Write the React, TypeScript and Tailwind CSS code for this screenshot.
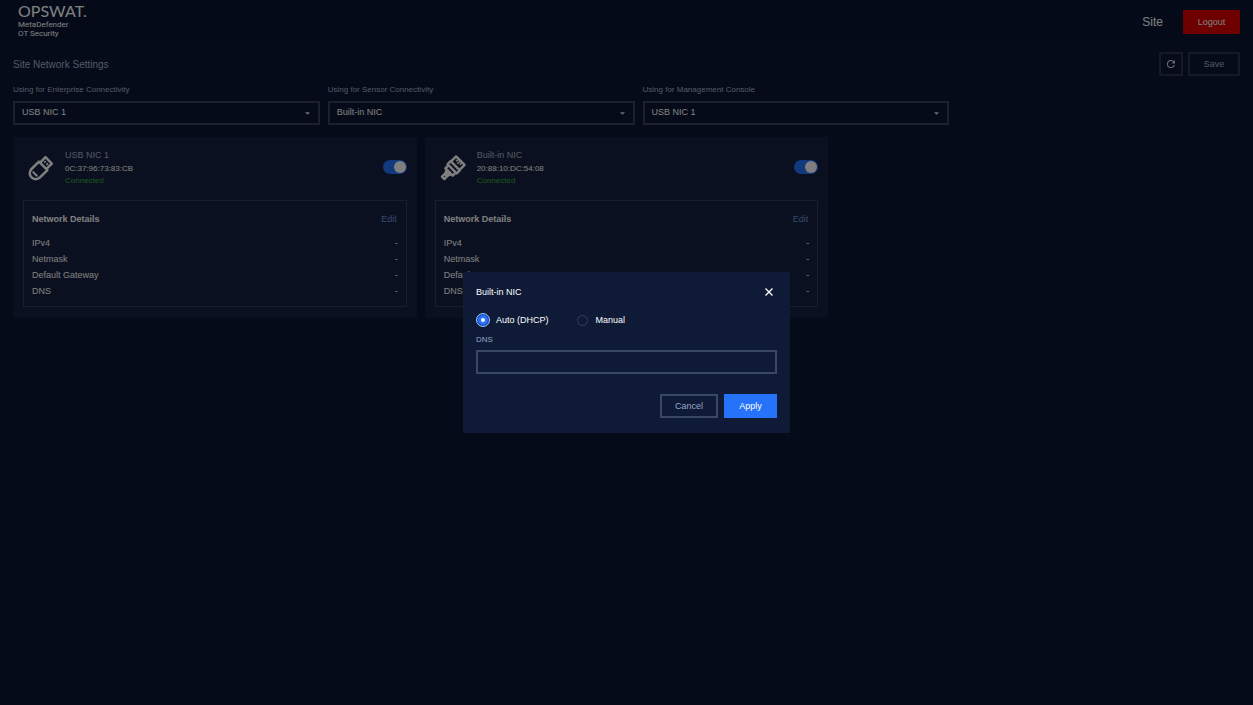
import { useState } from 'react';

const nics = ['USB NIC 1', 'Built-in NIC'];
const detailRows = ['IPv4', 'Netmask', 'Default Gateway', 'DNS'];

function UsbIcon() {
  return (
    <svg viewBox="0 0 26 26" className="h-[26px] w-[26px] overflow-visible" fill="none" stroke="#fff" strokeWidth="2.500" aria-hidden="true">
      <g transform="rotate(45 13 13)">
        <path d="M8.500 8V0.800h9V8" strokeLinejoin="round" />
        <path d="M7 8.500h12V19a6 6 0 0 1-12 0z" strokeLinejoin="round" />
        <path d="M10.600 4.500h1.800M13.700 4.500h1.800" strokeWidth="2" />
        <path d="M10.500 20h5" strokeWidth="2" strokeLinecap="round" />
      </g>
    </svg>
  );
}

function EthernetIcon() {
  return (
    <svg viewBox="0 0 26 26" className="h-[26px] w-[26px] overflow-visible" fill="none" stroke="#fff" strokeWidth="2.400" aria-hidden="true">
      <g transform="rotate(45 13 13)" strokeLinejoin="round">
        <path d="M7 8.500V1.200h12v7.300" />
        <path d="M10.500 1v3.500M13 1v4.500M15.500 1v3.500" strokeWidth="1.500" />
        <path d="M6.500 8.500h13v4.300h-13zM7.800 12.800h10.400v4.400h-10.400z" />
        <path d="M9.800 17.200h6.400l-1.200 3h-4z" fill="#fff" />
        <path d="M11.300 21.500h3.400v4h-3.400z" />
      </g>
    </svg>
  );
}

function RefreshIcon() {
  return (
    <svg viewBox="0 0 24 24" className="h-3 w-3" fill="currentColor" aria-hidden="true">
      <path d="M17.650 6.350A7.958 7.958 0 0 0 12 4a8 8 0 1 0 7.730 10h-2.080A6 6 0 1 1 12 6c1.660 0 3.140.690 4.220 1.780L13 11h7V4z" />
    </svg>
  );
}

function SelectField({ id, label, initial }: { id: string; label: string; initial: string }) {
  const [value, setValue] = useState(initial);
  return (
    <div className="flex w-1/4 flex-col">
      <label htmlFor={id} className="h-[17px] text-[8px] leading-3 text-[#a8b2ca]">{label}</label>
      <div className="relative">
        <select
          id={id}
          value={value}
          onChange={(e) => setValue(e.target.value)}
          className="block h-6 w-full appearance-none border-2 border-[#384258] bg-transparent px-[7px] text-[9px] text-white"
        >
          {nics.map((n) => <option key={n}>{n}</option>)}
        </select>
        <svg viewBox="0 0 6 3" className="pointer-events-none absolute top-[11px] right-[10px] h-[3px] w-[5px]" fill="#d9dbe0" aria-hidden="true">
          <path d="M0 0h6L3 3z" />
        </svg>
      </div>
    </div>
  );
}

function NicCard({ name, mac, icon }: { name: string; mac: string; icon: React.ReactNode }) {
  const [on, setOn] = useState(true);
  return (
    <section className="bg-[#14213e] px-[10px] pt-3 pb-[11px]">
      <div className="flex h-[51px] items-start">
        <div className="ml-1 pt-[7px]">{icon}</div>
        <div className="ml-3 flex-1">
          <h2 className="text-[9px] leading-3 text-[#a8b2ca]">{name}</h2>
          <p className="mt-[2px] text-[8px] leading-3 text-white">{mac}</p>
          <p className="text-[8px] leading-3 text-[#38b03c]">Connected</p>
        </div>
        <div className="relative mt-[11px] h-[14px] w-6">
          <input
            type="checkbox"
            role="switch"
            aria-label={name}
            checked={on}
            onChange={() => setOn(!on)}
            className="block h-full w-full cursor-pointer appearance-none rounded-full bg-[#4a5266] checked:bg-[#2672fb]"
          />
          <span className={on ? 'pointer-events-none absolute top-[1px] right-[1px] h-3 w-3 rounded-full bg-white' : 'pointer-events-none absolute top-[1px] left-[1px] h-3 w-3 rounded-full bg-white'} />
        </div>
      </div>
      <div className="border border-[#303c54] px-2 pt-3 pb-[7px]">
        <div className="mb-[10px] flex justify-between text-[9px] leading-3">
          <h3 className="font-bold text-white">Network Details</h3>
          <button type="button" className="mr-[1px] text-[#7090dc]">Edit</button>
        </div>
        <dl className="text-[9px] leading-4 text-white">
          {detailRows.map((row) => (
            <div key={row} className="flex justify-between">
              <dt>{row}</dt>
              <dd>-</dd>
            </div>
          ))}
        </dl>
      </div>
    </section>
  );
}

function EditDialog() {
  const [mode, setMode] = useState('auto');
  const [dns, setDns] = useState('');
  const radio = 'relative grid h-[14px] w-[14px] place-items-center';
  const input = 'h-[11px] w-[11px] appearance-none rounded-full border border-[#33415f] checked:h-[14px] checked:w-[14px] checked:border-[#9fbffb] checked:bg-[#2672fb] checked:shadow-[inset_0_0_0_1px_#1b4190]';
  const dot = 'pointer-events-none absolute h-1 w-1 rounded-full bg-white';
  return (
    <div role="dialog" aria-modal="true" aria-labelledby="dialog-title" className="w-[327px] bg-[#0e1a36] px-[13px] pt-3 pb-[15px] text-[9px] text-white">
      <div className="flex h-4 items-center justify-between">
        <h2 id="dialog-title" className="leading-3">Built-in NIC</h2>
        <button type="button" aria-label="Close" className="mr-1 block">
          <svg viewBox="0 0 8 8" className="block h-2 w-2" stroke="#fff" strokeWidth="1.300" aria-hidden="true">
            <path d="M.5.5l7 7M7.500.5l-7 7" />
          </svg>
        </button>
      </div>
      <div className="mt-3 flex h-4 items-center gap-[27px] leading-3">
        <label className="flex items-center gap-[6px]">
          <span className={radio}>
            <input type="radio" name="mode" checked={mode === 'auto'} onChange={() => setMode('auto')} className={input} />
            {mode === 'auto' && <span className={dot} />}
          </span>
          Auto (DHCP)
        </label>
        <label className="flex items-center gap-[6px]">
          <span className={radio}>
            <input type="radio" name="mode" checked={mode === 'manual'} onChange={() => setMode('manual')} className={input} />
            {mode === 'manual' && <span className={dot} />}
          </span>
          Manual
        </label>
      </div>
      <label htmlFor="dns" className="mt-[6px] block h-4 text-[8px] leading-3 text-[#98a6c8]">DNS</label>
      <input id="dns" value={dns} onChange={(e) => setDns(e.target.value)} className="block h-6 w-full border-2 border-[#3a4766] bg-transparent px-2 outline-none" />
      <div className="mt-5 flex justify-end gap-[6px]">
        <button type="button" className="h-6 w-[58px] border-2 border-[#3a4766] pt-[1px] text-[#98a6c8]">Cancel</button>
        <button type="button" className="h-6 w-[53px] bg-[#2672fb] pt-[1px] text-white">Apply</button>
      </div>
    </div>
  );
}

export default function App() {
  return (
    <div className="min-h-screen bg-[#0b1733] font-['Liberation_Sans',sans-serif]">
      <header className="flex h-11 items-center bg-[#091531] pr-[13px] pl-[18px]">
        <div className="flex-1 self-start pt-[5px] text-white">
          <div className="mb-[3px] font-['Lato',sans-serif] text-[16px] leading-3">OPSWAT.</div>
          <div className="font-['Roboto',sans-serif] text-[8px] leading-[9px]">MetaDefender<br />OT Security</div>
        </div>
        <a href="#site" className="mr-5 text-[12px] text-white">Site</a>
        <button type="button" className="h-6 w-[57px] bg-[#dc0000] pt-[2px] text-[9px] text-white">Logout</button>
      </header>
      <main className="px-[13px] pt-2">
        <div className="flex h-6 items-center">
          <h1 className="flex-1 text-[10px] text-[#a8b2ca]">Site Network Settings</h1>
          <button type="button" aria-label="Refresh" className="mr-[5px] grid h-6 w-6 place-items-center border-2 border-[#2a3448] text-[#d9dbe0]">
            <RefreshIcon />
          </button>
          <button type="button" className="h-6 w-[52px] border-2 border-[#2a3448] text-[9px] leading-3 text-[#a8b2ca]">Save</button>
        </div>
        <div className="mt-2 flex gap-2">
          <SelectField id="enterprise" label="Using for Enterprise Connectivity" initial="USB NIC 1" />
          <SelectField id="sensor" label="Using for Sensor Connectivity" initial="Built-in NIC" />
          <SelectField id="console" label="Using for Management Console" initial="USB NIC 1" />
        </div>
        <div className="mt-3 grid grid-cols-3 gap-2">
          <NicCard name="USB NIC 1" mac="0C:37:96:73:83:CB" icon={<UsbIcon />} />
          <NicCard name="Built-in NIC" mac="20:88:10:DC:54:08" icon={<EthernetIcon />} />
        </div>
      </main>
      <div className="fixed inset-0 grid place-items-center bg-black/50">
        <EditDialog />
      </div>
    </div>
  );
}
